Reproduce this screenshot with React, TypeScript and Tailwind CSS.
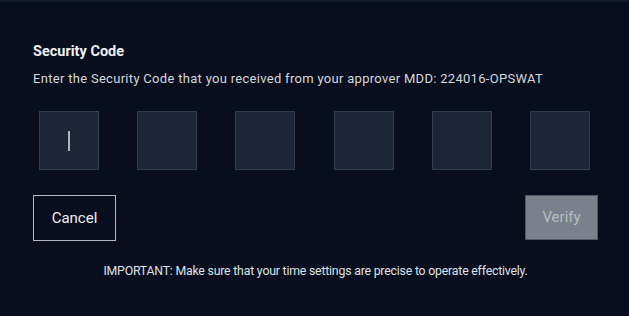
export default function App() {
  const cells = [0, 1, 2, 3, 4, 5];
  return (
    <div
      className="min-h-screen w-full bg-[#080e1e] border-t-2 border-[#0f1828]"
      style={{ fontFamily: 'Roboto, "Noto Sans", sans-serif' }}
    >
      <div className="pl-[33px] pr-[31px] pt-[40px]">
        <h2 className="text-[14.5px] leading-[20px] font-bold text-[#eef0f3]">Security Code</h2>
        <p className="mt-[8px] text-[13px] leading-[18px] tracking-[0.3px] text-[#d3d7dd]">
          Enter the Security Code that you received from your approver MDD: 224016-OPSWAT
        </p>

        <div className="mt-[23px] flex justify-between pl-[6px] pr-[8px]">
          {cells.map((i) => (
            <div
              key={i}
              className="w-[60px] h-[59px] bg-[#1b2639] border border-[#323d4e] flex items-center justify-center"
            >
              {i === 0 && <div className="w-[2px] h-[20px] bg-[#aeb3bb]" />}
            </div>
          ))}
        </div>

        <div className="mt-[25px] flex justify-between items-start">
          <button className="w-[83px] h-[46px] border border-[#b4b8bf] text-[15px] text-[#eef0f3]">
            Cancel
          </button>
          <button className="w-[73px] h-[45px] bg-[#7b808a] border border-[#525a68] text-[15px] text-[#b8bcc3]">
            Verify
          </button>
        </div>

        <p className="mt-[22px] text-center text-[12.3px] leading-[16px] tracking-[-0.2px] text-[#dfe2e6]">
          IMPORTANT: Make sure that your time settings are precise to operate effectively.
        </p>
      </div>
    </div>
  );
}
